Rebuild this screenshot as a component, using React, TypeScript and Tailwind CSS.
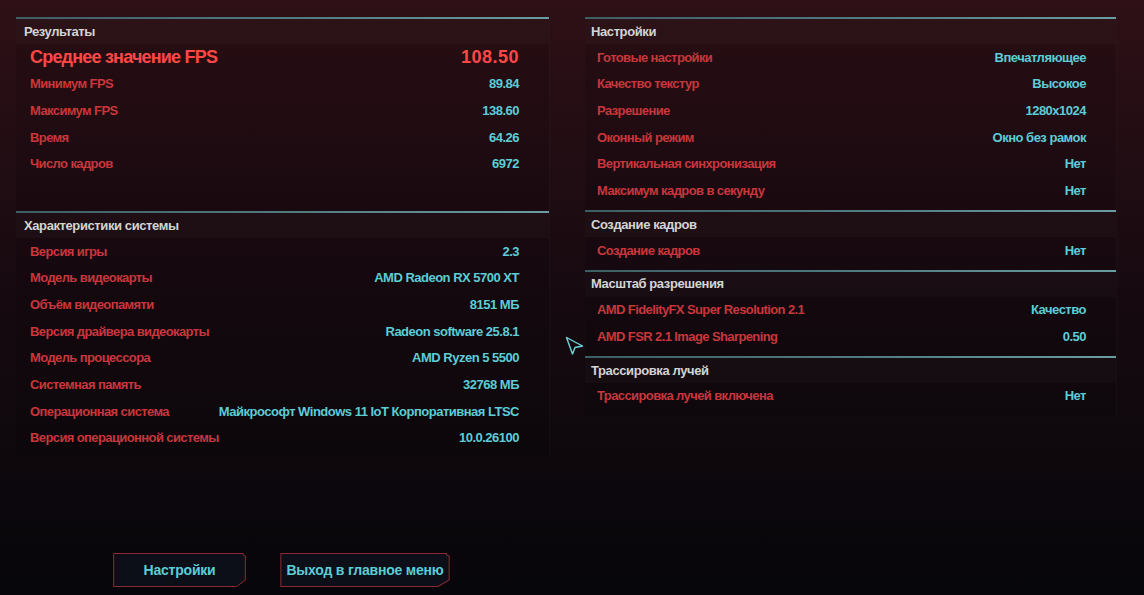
import React from "react";

type RowT = { label: string; value: string };

const Line = () => (
  <div className="h-[2px] w-full bg-gradient-to-r from-[#3d5f64] via-[#4f7a7f] to-[#6a9ca1]" />
);

function Header({ title, pl }: { title: string; pl: string }) {
  return (
    <div className={`flex h-[25px] items-center bg-white/[0.025] ${pl}`}>
      <span className="whitespace-nowrap text-[13px] font-bold tracking-[-0.4px] text-[#d4d4d4]">{title}</span>
    </div>
  );
}

function Row({ label, value, pl }: RowT & { pl: string }) {
  return (
    <div className={`flex h-[26.67px] items-center justify-between pr-[30px] ${pl}`}>
      <span className="whitespace-nowrap text-[13px] font-bold tracking-[-0.6px] text-[#c9363c]">{label}</span>
      <span className="whitespace-nowrap text-[13px] font-bold tracking-[-0.5px] text-[#5ccdd6]">{value}</span>
    </div>
  );
}

function Section({
  title,
  rows,
  hpl,
  rpl,
  className = "",
  big,
}: {
  title: string;
  rows: RowT[];
  hpl: string;
  rpl: string;
  className?: string;
  big?: RowT;
}) {
  return (
    <div className={`flex flex-col border-r border-white/[0.03] bg-black/[0.1] pb-[6px] ${className}`}>
      <Line />
      <Header title={title} pl={hpl} />
      {big && (
        <div className={`flex h-[26.67px] items-center justify-between pr-[30px] ${rpl}`}>
          <span className="whitespace-nowrap text-[18px] font-bold tracking-[-0.8px] text-[#ff4747]">{big.label}</span>
          <span className="whitespace-nowrap text-[18px] font-bold tracking-[0.5px] text-[#ff4747]">{big.value}</span>
        </div>
      )}
      {rows.map((r) => (
        <Row key={r.label} {...r} pl={rpl} />
      ))}
    </div>
  );
}

function Button({ label, w }: { label: string; w: string }) {
  return (
    <div className={`relative flex h-[34px] items-center justify-center ${w}`}>
      <svg className="absolute inset-0 h-full w-full" preserveAspectRatio="none" viewBox="0 0 100 34">
        <polygon
          points="0.5,0.5 98,0.5 98,2 99.5,3 99.5,27 93,33.5 0.5,33.5"
          fill="#0c0f17"
          stroke="#8a2a34"
          strokeWidth="1"
          vectorEffect="non-scaling-stroke"
        />
      </svg>
      <span className="relative whitespace-nowrap text-[14px] font-bold tracking-[-0.2px] text-[#5ccdd6]">{label}</span>
    </div>
  );
}

export default function App() {
  return (
    <div className="relative h-[595px] w-[1144px] overflow-hidden bg-gradient-to-b from-[#2e1016] via-[#160a10] to-[#07060a] [font-family:'Liberation_Sans','Arial',sans-serif]">
      <div className="flex h-full gap-[35px] pl-[16px] pt-[17px]">
        <div className="flex w-[534px] flex-col">
          <Section
            className="h-[194px]"
            title="Результаты"
            hpl="pl-[8px]"
            rpl="pl-[14px]"
            big={{ label: "Среднее значение FPS", value: "108.50" }}
            rows={[
              { label: "Минимум FPS", value: "89.84" },
              { label: "Максимум FPS", value: "138.60" },
              { label: "Время", value: "64.26" },
              { label: "Число кадров", value: "6972" },
            ]}
          />
          <Section
            title="Характеристики системы"
            hpl="pl-[8px]"
            rpl="pl-[14px]"
            rows={[
              { label: "Версия игры", value: "2.3" },
              { label: "Модель видеокарты", value: "AMD Radeon RX 5700 XT" },
              { label: "Объём видеопамяти", value: "8151 МБ" },
              { label: "Версия драйвера видеокарты", value: "Radeon software 25.8.1" },
              { label: "Модель процессора", value: "AMD Ryzen 5 5500" },
              { label: "Системная память", value: "32768 МБ" },
              { label: "Операционная система", value: "Майкрософт Windows 11 IoT Корпоративная LTSC" },
              { label: "Версия операционной системы", value: "10.0.26100" },
            ]}
          />
          <div className="mt-auto flex justify-center gap-[34px] pb-[8px] pr-[3px]">
            <Button label="Настройки" w="w-[133px]" />
            <Button label="Выход в главное меню" w="w-[170px]" />
          </div>
        </div>
        <div className="flex w-[532px] flex-col">
          <Section
            title="Настройки"
            hpl="pl-[6px]"
            rpl="pl-[12px]"
            rows={[
              { label: "Готовые настройки", value: "Впечатляющее" },
              { label: "Качество текстур", value: "Высокое" },
              { label: "Разрешение", value: "1280x1024" },
              { label: "Оконный режим", value: "Окно без рамок" },
              { label: "Вертикальная синхронизация", value: "Нет" },
              { label: "Максимум кадров в секунду", value: "Нет" },
            ]}
          />
          <Section
            title="Создание кадров"
            hpl="pl-[6px]"
            rpl="pl-[12px]"
            rows={[{ label: "Создание кадров", value: "Нет" }]}
          />
          <Section
            title="Масштаб разрешения"
            hpl="pl-[6px]"
            rpl="pl-[12px]"
            rows={[
              { label: "AMD FidelityFX Super Resolution 2.1", value: "Качество" },
              { label: "AMD FSR 2.1 Image Sharpening", value: "0.50" },
            ]}
          />
          <Section
            title="Трассировка лучей"
            hpl="pl-[6px]"
            rpl="pl-[12px]"
            rows={[{ label: "Трассировка лучей включена", value: "Нет" }]}
          />
        </div>
      </div>
      <svg className="absolute left-[565px] top-[336px] h-[20px] w-[20px]" viewBox="0 0 20 20">
        <polygon points="1.5,1.5 17.5,10 10,11.5 7.5,18" fill="none" stroke="#6fd6de" strokeWidth="1.4" strokeLinejoin="round" />
      </svg>
    </div>
  );
}
